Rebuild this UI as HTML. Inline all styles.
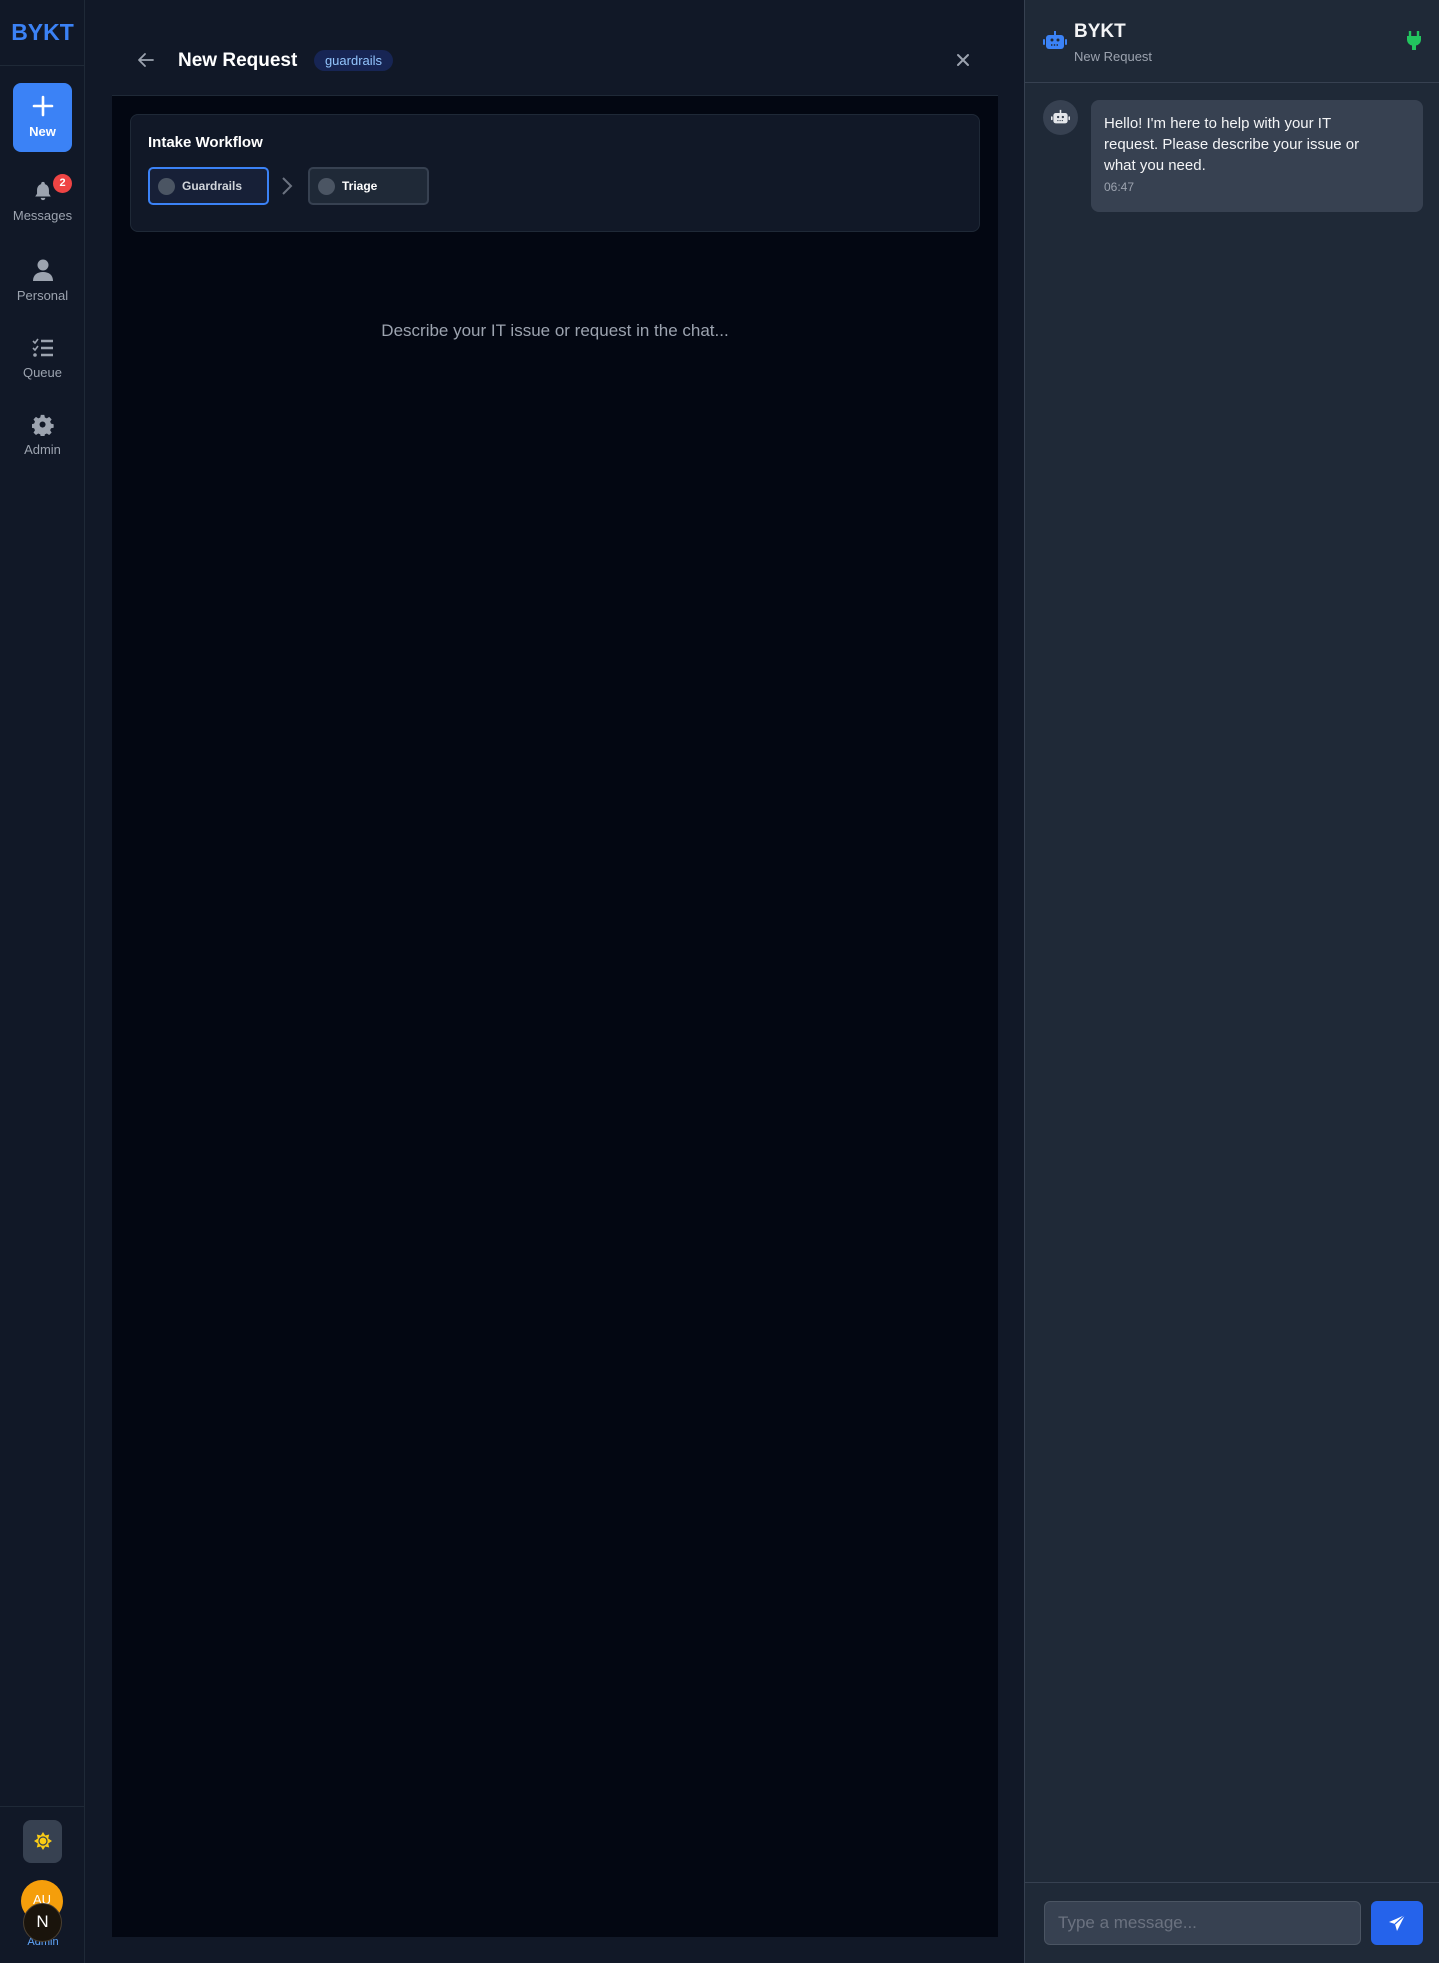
<!DOCTYPE html>
<html><head><meta charset="utf-8"><style>
*{box-sizing:border-box;margin:0;padding:0}
body{width:1439px;height:1963px;background:#111827;font-family:"Liberation Sans",sans-serif;position:relative;overflow:hidden;color:#fff}
.abs{position:absolute}
.side{left:0;top:0;width:85px;height:1963px;background:#111827;border-right:1px solid #1f2937}
.nav{position:absolute;left:0;width:85px;text-align:center;color:#9ca3af;font-size:13px}
.right{left:1024px;top:0;width:415px;height:1963px;background:#1f2937;border-left:1px solid #374151}
</style></head><body>
<div class="abs side">
  <div class="abs" style="left:0;top:19px;width:85px;text-align:center;color:#3b82f6;font-weight:bold;font-size:23px">BYKT</div>
  <div class="abs" style="left:0;top:65px;width:85px;height:1px;background:#1f2937"></div>
  <div class="abs" style="left:13px;top:83px;width:59px;height:69px;background:#3b82f6;border-radius:8px;text-align:center">
    <svg width="22" height="22" viewBox="0 0 22 22" style="margin-top:12px"><path d="M11 2v18M2 11h18" stroke="#fff" stroke-width="2.6" stroke-linecap="round"/></svg>
    <div style="font-size:13px;font-weight:bold;margin-top:2px">New</div>
  </div>
  <div class="nav" style="top:180px">
    <svg width="22" height="22" viewBox="0 0 24 24"><path d="M12 2a2 2 0 0 0-2 2v.5C7 5.4 5.5 8 5.5 11v4L3.5 18h17l-2-3v-4c0-3-1.5-5.6-4.5-6.5V4a2 2 0 0 0-2-2zM9.5 19.5a2.5 2.5 0 0 0 5 0z" fill="#9ca3af"/></svg>
    <div style="margin-top:3px">Messages</div>
  </div>
  <div class="abs" style="left:53px;top:174px;width:19px;height:19px;border-radius:50%;background:#ef4444;color:#fff;font-size:11px;font-weight:bold;text-align:center;line-height:19px">2</div>
  <div class="nav" style="top:258px">
    <svg width="22" height="24" viewBox="0 0 22 24"><circle cx="11" cy="7" r="5.5" fill="#9ca3af"/><path d="M1 23c0-6 4-9 10-9s10 3 10 9z" fill="#9ca3af"/></svg>
    <div style="margin-top:3px">Personal</div>
  </div>
  <div class="nav" style="top:337px">
    <svg width="24" height="22" viewBox="0 0 24 22"><path d="M2 4l2 2 3-4M2 11l2 2 3-4" stroke="#9ca3af" stroke-width="1.6" fill="none"/><circle cx="4" cy="18" r="1.8" fill="#9ca3af"/><path d="M10 4h12M10 11h12M10 18h12" stroke="#9ca3af" stroke-width="2.4"/></svg>
    <div style="margin-top:3px">Queue</div>
  </div>
  <div class="nav" style="top:414px">
    <svg width="22" height="22" viewBox="0 0 24 24"><path fill="#9ca3af" d="M10 1h4l.6 3 2.3 1 2.6-1.7 2.8 2.8L20.6 8.7l1 2.3 3 .6v4l-3 .6-1 2.3 1.700 2.6-2.8 2.8-2.6-1.7-2.3 1-.6 3h-4l-.6-3-2.3-1-2.6 1.7-2.8-2.8 1.7-2.6-1-2.3-3-.6v-4l3-.6 1-2.3L1.7 6.1 4.5 3.3 7.1 5l2.3-1z" transform="scale(.96)"/><circle cx="11.5" cy="11.5" r="3.3" fill="#111827"/></svg>
    <div style="margin-top:3px">Admin</div>
  </div>
  <div class="abs" style="left:0;top:1806px;width:85px;height:1px;background:#1f2937"></div>
  <div class="abs" style="left:23px;top:1820px;width:39px;height:43px;background:#374151;border-radius:8px;text-align:center">
    <svg width="24" height="24" viewBox="0 0 24 24" style="margin-top:9px"><path fill="#facc15" d="M12 1l2.2 3.5 4-1-1 4 3.8 2.5-3.8 2.5 1 4-4-1L12 19l-2.2-3.5-4 1 1-4L3 10l3.8-2.5-1-4 4 1z" transform="translate(0,2)"/><circle cx="12" cy="12" r="4" fill="#facc15" stroke="#374151" stroke-width="1.2"/></svg>
  </div>
  <div class="abs" style="left:21px;top:1880px;width:42px;height:42px;border-radius:50%;background:#f59e0b;color:#fff;font-size:13px;text-align:center;line-height:40px">AU</div>
  <div class="abs" style="left:22px;top:1936px;width:42px;text-align:center;font-size:11px;color:#60a5fa">Admin</div>
  <div class="abs" style="left:23px;top:1903px;width:39px;height:39px;border-radius:50%;background:#1a140c;border:1.5px solid #4a3f30;color:#fff;font-size:17px;text-align:center;line-height:36px">N</div>
</div>

<svg class="abs" style="left:136px;top:50px" width="20" height="20" viewBox="0 0 20 20"><path d="M17 10H3M9 4l-6 6 6 6" stroke="#9ca3af" stroke-width="1.8" fill="none" stroke-linecap="round" stroke-linejoin="round"/></svg>
<div class="abs" style="left:178px;top:50px;font-size:19px;font-weight:bold;color:#fff">New Request</div>
<div class="abs" style="left:314px;top:50px;width:79px;height:21px;border-radius:11px;background:#172554;color:#93c5fd;font-size:13px;text-align:center;line-height:21px">guardrails</div>
<svg class="abs" style="left:955px;top:52px" width="16" height="16" viewBox="0 0 16 16"><path d="M3 3l10 10M13 3L3 13" stroke="#9ca3af" stroke-width="2" stroke-linecap="round"/></svg>

<div class="abs" style="left:112px;top:95px;width:886px;height:1842px;background:#030712;border-top:1px solid #1f2937">
  <div class="abs" style="left:18px;top:18px;width:850px;height:118px;background:#111827;border:1px solid #1f2937;border-radius:8px">
    <div class="abs" style="left:17px;top:19px;font-size:15px;font-weight:bold;color:#fff">Intake Workflow</div>
    <div class="abs" style="left:17px;top:52px;width:121px;height:38px;border:2px solid #3b82f6;border-radius:5px;background:#172037">
      <div class="abs" style="left:8px;top:9px;width:17px;height:17px;border-radius:50%;background:#4b5563"></div>
      <div class="abs" style="left:32px;top:10px;font-size:12px;font-weight:bold;color:#d1d5db">Guardrails</div>
    </div>
    <svg class="abs" style="left:149px;top:60px" width="14" height="22" viewBox="0 0 14 22"><path d="M3 3l8 8-8 8" stroke="#6b7280" stroke-width="2" fill="none"/></svg>
    <div class="abs" style="left:177px;top:52px;width:121px;height:38px;border:2px solid #374151;border-radius:5px;background:#1f2937">
      <div class="abs" style="left:8px;top:9px;width:17px;height:17px;border-radius:50%;background:#4b5563"></div>
      <div class="abs" style="left:32px;top:10px;font-size:12px;font-weight:bold;color:#fff">Triage</div>
    </div>
  </div>
  <div class="abs" style="left:0;top:225px;width:886px;text-align:center;font-size:17px;color:#9ca3af">Describe your IT issue or request in the chat...</div>
</div>

<div class="abs right">
  <svg class="abs" style="left:18px;top:30px" width="24" height="22" viewBox="0 0 24 22"><rect x="3" y="5" width="18" height="14" rx="3" fill="#3b82f6"/><rect x="11" y="1" width="2" height="4" fill="#3b82f6"/><rect x="0" y="9" width="2" height="6" rx="1" fill="#3b82f6"/><rect x="22" y="9" width="2" height="6" rx="1" fill="#3b82f6"/><circle cx="9" cy="10" r="1.5" fill="#1f2937"/><circle cx="15" cy="10" r="1.5" fill="#1f2937"/><path d="M8 15h8" stroke="#1f2937" stroke-width="1.4" stroke-dasharray="1.4 1.4"/></svg>
  <div class="abs" style="left:49px;top:21px;font-size:19px;font-weight:bold;color:#f3f4f6">BYKT</div>
  <div class="abs" style="left:49px;top:49px;font-size:13px;color:#9ca3af">New Request</div>
  <svg class="abs" style="left:381px;top:31px" width="16" height="20" viewBox="0 0 16 20"><path d="M4 0v5M12 0v5" stroke="#22c55e" stroke-width="2.4"/><path d="M1 5h14v4a6 6 0 0 1-5 5.5V19H6v-4.5A6 6 0 0 1 1 9z" fill="#22c55e"/></svg>
  <div class="abs" style="left:0;top:82px;width:415px;height:1px;background:#374151"></div>
  <div class="abs" style="left:18px;top:100px;width:35px;height:35px;border-radius:50%;background:#374151">
    <svg class="abs" style="left:8px;top:8px" width="19" height="18" viewBox="0 0 24 22"><rect x="3" y="6" width="18" height="13" rx="3" fill="#e5e7eb"/><rect x="11" y="2" width="2" height="4" fill="#e5e7eb"/><rect x="0" y="10" width="2" height="5" rx="1" fill="#e5e7eb"/><rect x="22" y="10" width="2" height="5" rx="1" fill="#e5e7eb"/><circle cx="9" cy="11" r="1.5" fill="#374151"/><circle cx="15" cy="11" r="1.5" fill="#374151"/><path d="M8 15.5h8" stroke="#374151" stroke-width="1.4" stroke-dasharray="1.4 1.4"/></svg>
  </div>
  <div class="abs" style="left:66px;top:100px;width:332px;height:112px;background:#374151;border-radius:8px;padding:13px;font-size:15px;line-height:21px;color:#f3f4f6;white-space:nowrap">Hello! I'm here to help with your IT<br>request. Please describe your issue or<br>what you need.<div style="font-size:12px;color:#9ca3af;margin-top:3px;line-height:16px">06:47</div></div>
  <div class="abs" style="left:0;top:1882px;width:415px;height:1px;background:#374151"></div>
  <div class="abs" style="left:19px;top:1901px;width:317px;height:44px;background:#374151;border:1px solid #4b5563;border-radius:6px;padding-left:13px;line-height:42px;font-size:17px;color:#6b7280">Type a message...</div>
  <div class="abs" style="left:346px;top:1901px;width:52px;height:44px;background:#2563eb;border-radius:6px">
    <svg class="abs" style="left:17px;top:13px" width="18" height="18" viewBox="0 0 18 18"><path d="M17 1L1 8l6 2 2 7z" fill="#fff"/><path d="M7 10l10-9" stroke="#2563eb" stroke-width="1.2"/></svg>
  </div>
</div>
</body></html>
